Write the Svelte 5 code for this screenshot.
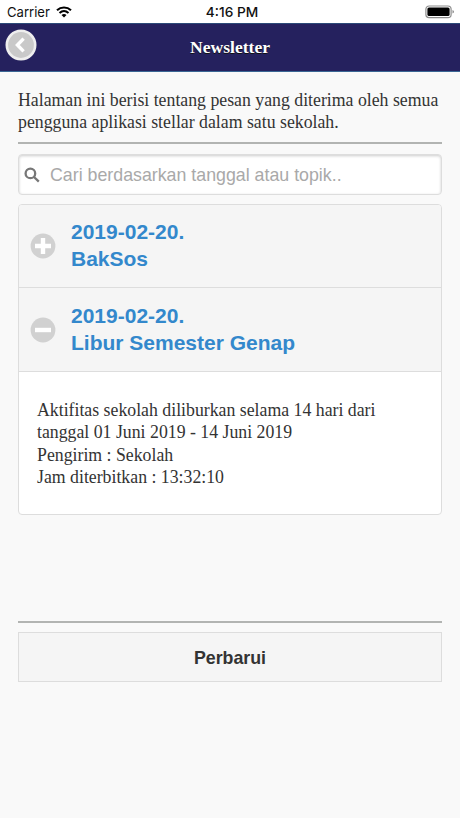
<script>
	/* messages shown in the list */
	let messages = [
		{ date: '2019-02-20.', topic: 'BakSos', open: false, lines: [] },
		{
			date: '2019-02-20.',
			topic: 'Libur Semester Genap',
			open: true,
			lines: [
				'Aktifitas sekolah diliburkan selama 14 hari dari',
				'tanggal 01 Juni 2019 - 14 Juni 2019',
				'Pengirim : Sekolah',
				'Jam diterbitkan : 13:32:10'
			]
		}
	];

	let query = '';

	function toggle(message) {
		message.open = !message.open;
		messages = messages;
	}
</script>

<!-- phone status bar -->
<div class="status">
	<div class="carrier">
		<span>Carrier</span>
		<svg width="16" height="12" viewBox="0 0 16 12">
			<path d="M1 4.3C5 .6 11 .6 15 4.3" />
			<path d="M3.5 7C6.2 4.6 9.8 4.6 12.5 7" />
			<path class="dot" d="M8 11.5L5.5 8.9Q8 6.9 10.5 8.9Z" />
		</svg>
	</div>
	<span class="clock">4:16 PM</span>
	<svg class="battery" width="30" height="14" viewBox="0 0 30 14">
		<rect x=".9" y="1" width="25.2" height="11.6" rx="3.2" />
		<rect class="fill" x="2.4" y="2.5" width="22.2" height="8.6" rx="1.6" />
		<path class="cap" d="M27.5 5Q29 5.5 29 6.8Q29 8.1 27.5 8.6Z" />
	</svg>
</div>

<header>
	<button class="back" aria-label="Kembali">
		<svg width="32" height="32" viewBox="0 0 32 32">
			<circle cx="16" cy="16" r="14.2" />
			<path d="M18.6 9.6L12.4 16L18.6 22.4" />
		</svg>
	</button>
	<h1>Newsletter</h1>
</header>

<main>
	<p class="intro">Halaman ini berisi tentang pesan yang diterima oleh semua<br>pengguna aplikasi stellar dalam satu sekolah.</p>
	<hr>

	<label class="search">
		<svg width="16" height="16" viewBox="0 0 16 16">
			<circle cx="6.4" cy="6.4" r="4.8" />
			<path d="M10 10L14.8 14.6" />
		</svg>
		<input type="text" placeholder="Cari berdasarkan tanggal atau topik.." bind:value={query}>
	</label>

	<!-- collapsible list -->
	<div class="list">
		{#each messages as message}
			<button class="item" on:click={() => toggle(message)}>
				<svg width="26" height="26" viewBox="0 0 26 26">
					<circle cx="13" cy="13" r="12.4" />
					<path d={message.open ? 'M5 13H21' : 'M5 13H21M13 5V21'} />
				</svg>
				<span>{message.date}<br>{message.topic}</span>
			</button>
			{#if message.open}
				<div class="detail">
					{#each message.lines as line}
						<div>{line}</div>
					{/each}
				</div>
			{/if}
		{/each}
	</div>

	<hr class="bottom">
	<button class="refresh">Perbarui</button>
</main>

<style>
	:global(body) { background: #f9f9f9; }

	button {
		margin: 0;
		padding: 0;
		border: 0;
		background: none;
		cursor: pointer;
	}

	svg { display: block; flex: none; }

	.status {
		display: grid;
		grid-template-columns: 1fr auto 1fr;
		align-items: center;
		height: 23px;
		padding: 0 5px 0 7px;
		box-sizing: border-box;
		background: #fff;
		color: #111;
		font: 13.1px Inter, sans-serif;
	}

	.carrier { display: flex; align-items: center; gap: 6px; }
	.carrier path { fill: none; stroke: #000; stroke-width: 2.1; }
	.carrier .dot { fill: #000; stroke: none; }

	.clock { padding-left: 2px; font-size: 13.7px; font-weight: 500; }

	.battery { justify-self: end; }
	.battery rect { fill: none; stroke: #8c8c8c; stroke-width: 1.2; }
	.battery .fill { fill: #000; stroke: none; }
	.battery .cap { fill: #888; }

	header {
		display: grid;
		grid-template-columns: 1fr auto 1fr;
		height: 49px;
		padding-left: 5px;
		box-sizing: border-box;
		border-top: 1px solid #2c4a78;
		border-bottom: 1px solid #3a6795;
		background: #25215e;
	}

	h1 {
		margin: 0 5px 0 0;
		align-self: center;
		color: #fff;
		font: bold 17.6px 'Liberation Serif', serif;
		text-shadow: 0 1px 0 #111;
	}

	.back { width: 32px; height: 32px; margin-top: 5px; }
	.back circle { fill: #c9c9c9; stroke: #eee; stroke-width: 2.6; }
	.back path { fill: none; stroke: #fff; stroke-width: 3.4; }

	main {
		padding: 17px 18px 0;
		color: #333;
		font: 17.77px/22.3px 'Liberation Serif', serif;
	}

	.intro { height: 45px; margin: 0 0 8px; white-space: nowrap; }

	hr {
		height: 2px;
		margin: 0;
		border: 0;
		background: #b2b4b2;
	}

	.search {
		display: flex;
		align-items: center;
		height: 41px;
		margin: 10px 0 9px;
		padding-left: 5px;
		box-sizing: border-box;
		border: 1px solid #ddd;
		border-radius: 4px;
		background: #fff;
		box-shadow: inset 0 1px 3px rgba(0, 0, 0, .2);
	}

	.search circle, .search path { fill: none; stroke: #777; stroke-width: 2.3; }

	input {
		flex: 1;
		min-width: 0;
		margin-left: 10px;
		padding: 2px 0 0;
		border: 0;
		outline: 0;
		background: none;
		font: 17.8px 'Liberation Sans', sans-serif;
	}

	input::placeholder { color: #a9a9a9; }

	.list {
		overflow: hidden;
		border: 1px solid #ddd;
		border-radius: 4px;
		background: #fff;
	}

	.item {
		display: flex;
		align-items: center;
		gap: 15px;
		width: 100%;
		height: 82px;
		padding-left: 11px;
		background: #f5f5f5;
		color: #3388cc;
		font: bold 21px/26.7px 'Liberation Sans', sans-serif;
		text-align: left;
	}

	.item + .item { height: 84px; border-top: 1px solid #ddd; }
	.item circle { fill: #d1d1d1; }
	.item path { stroke: #fff; stroke-width: 4.4; }

	.detail {
		height: 143px;
		padding: 27px 18px 0;
		box-sizing: border-box;
		border-top: 1px solid #ddd;
		white-space: nowrap;
	}

	.bottom { margin: 106px 0 9px; }

	.refresh {
		display: block;
		width: 100%;
		height: 50px;
		padding-top: 2px;
		border: 1px solid #ddd;
		background: #f5f5f5;
		color: #333;
		font: bold 17.8px 'Liberation Sans', sans-serif;
	}
</style>
